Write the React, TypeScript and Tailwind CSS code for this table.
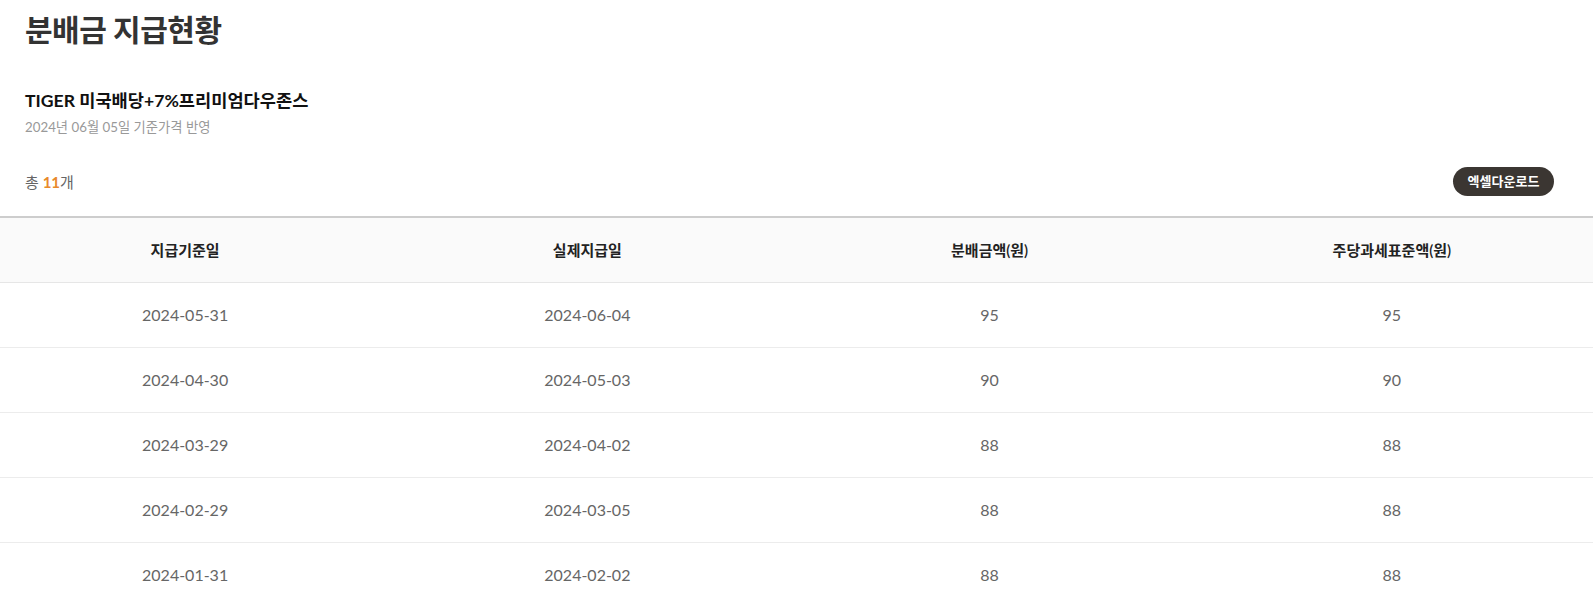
const FONT = "font-['Lato','Noto_Sans_CJK_KR',sans-serif]";

type Row = {
  baseDate: string;
  payDate: string;
  amount: string;
  taxBase: string;
};

const rows: Row[] = [
  { baseDate: "2024-05-31", payDate: "2024-06-04", amount: "95", taxBase: "95" },
  { baseDate: "2024-04-30", payDate: "2024-05-03", amount: "90", taxBase: "90" },
  { baseDate: "2024-03-29", payDate: "2024-04-02", amount: "88", taxBase: "88" },
  { baseDate: "2024-02-29", payDate: "2024-03-05", amount: "88", taxBase: "88" },
  { baseDate: "2024-01-31", payDate: "2024-02-02", amount: "88", taxBase: "88" },
];

const headers = ["지급기준일", "실제지급일", "분배금액(원)", "주당과세표준액(원)"];

const App = () => {
  return (
    <div className={`${FONT} w-full overflow-hidden bg-white`}>
      <div className="px-[25px] pt-[9px]">
        <h1 className="text-[30px] font-bold leading-[40px] tracking-[-0.5px] text-[#333]">분배금 지급현황</h1>

        <div className="mt-[40px]">
          <p className="text-[17.6px] font-bold leading-[24px] text-[#111]">TIGER 미국배당+7%프리미엄다우존스</p>
          <p className="mt-[5px] text-[13.3px] leading-[18px] text-[#999]">2024년 06월 05일 기준가격 반영</p>
        </div>

        <div className="mt-[31px] flex items-center justify-between pr-[14px]">
          <p className="text-[15px] leading-[20px] text-[#666]">
            총 <span className="font-bold text-[#e8892b]">11</span>개
          </p>
          <button className="h-[29px] w-[101px] rounded-full bg-[#3b3632] text-[13px] font-bold text-white">
            엑셀다운로드
          </button>
        </div>
      </div>

      <div className="mt-[20px] -ml-4 w-[calc(100%+16px)] border-t-2 border-[#cdcdcd]">
        <div className="grid grid-cols-4 h-[65px] items-center border-b border-[#e6e6e6] bg-[#fafafa]">
          {headers.map((h) => (
            <div key={h} className="text-center text-[15px] font-semibold text-[#222]">
              {h}
            </div>
          ))}
        </div>
        {rows.map((r) => (
          <div
            key={r.baseDate}
            className="grid grid-cols-4 h-[65px] items-center border-b border-[#ececec] text-center text-[16px] text-[#666]"
          >
            <div>{r.baseDate}</div>
            <div>{r.payDate}</div>
            <div>{r.amount}</div>
            <div>{r.taxBase}</div>
          </div>
        ))}
      </div>
    </div>
  );
};

export default App;
